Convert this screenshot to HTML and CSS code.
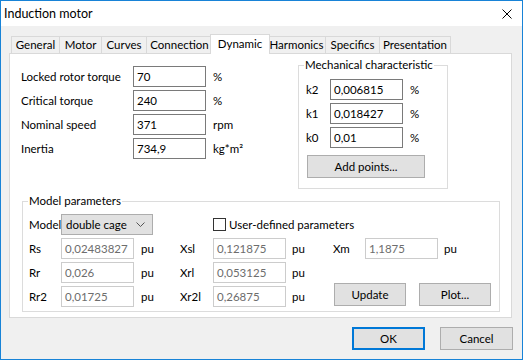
FILE: index.html
```html
<!DOCTYPE html>
<html>
<head>
<meta charset="utf-8">
<link rel="stylesheet" href="styles.css">
</head>
<body>
<div class="window">
  <div class="titlebar">
    <span class="title">Induction motor</span>
    <svg class="close" width="10" height="10" viewBox="0 0 10 10"><path d="M0.5 0.5L9.5 9.5M9.5 0.5L0.5 9.5" stroke="#000" stroke-width="1" fill="none"/></svg>
  </div>
  <div class="client">
    <div class="tabs">
      <div class="tab t-general">General</div>
      <div class="tab t-motor">Motor</div>
      <div class="tab t-curves">Curves</div>
      <div class="tab t-connection">Connection</div>
      <div class="tab active t-dynamic">Dynamic</div>
      <div class="tab t-harmonics">Harmonics</div>
      <div class="tab t-specifics">Specifics</div>
      <div class="tab t-presentation">Presentation</div>
    </div>
    <div class="panel">
      <div class="top-row">
        <div class="fields">
          <div class="field-row"><span class="lbl">Locked rotor torque</span><div class="input">70</div><span class="unit">%</span></div>
          <div class="field-row"><span class="lbl">Critical torque</span><div class="input">240</div><span class="unit">%</span></div>
          <div class="field-row"><span class="lbl">Nominal speed</span><div class="input">371</div><span class="unit">rpm</span></div>
          <div class="field-row"><span class="lbl">Inertia</span><div class="input">734,9</div><span class="unit">kg*m²</span></div>
        </div>
        <div class="group mech">
          <span class="legend">Mechanical characteristic</span>
          <div class="k-row"><span class="klbl">k2</span><div class="input">0,006815</div><span class="unit">%</span></div>
          <div class="k-row"><span class="klbl">k1</span><div class="input">0,018427</div><span class="unit">%</span></div>
          <div class="k-row"><span class="klbl">k0</span><div class="input">0,01</div><span class="unit">%</span></div>
          <div class="btn add">Add points...</div>
        </div>
      </div>
      <div class="group model">
        <span class="legend">Model parameters</span>
        <div class="model-grid">
          <span class="glbl">Model</span>
          <div class="select"><span>double cage</span><svg width="9" height="5" viewBox="0 0 9 5"><path d="M0.5 0.5L4.5 4.5L8.5 0.5" stroke="#555" stroke-width="1" fill="none"/></svg></div>
          <div class="check"><span class="box"></span><span>User-defined parameters</span></div>

          <span class="glbl">Rs</span><div class="input dis">0,02483827</div><span class="pu">pu</span>
          <span class="glbl">Xsl</span><div class="input dis">0,121875</div><span class="pu pu2">pu</span>
          <span class="glbl">Xm</span><div class="input dis">1,1875</div><span class="pu pu2">pu</span>

          <span class="glbl">Rr</span><div class="input dis">0,026</div><span class="pu">pu</span>
          <span class="glbl">Xrl</span><div class="input dis">0,053125</div><span class="pu pu2">pu</span>
          <span class="filler"></span>

          <span class="glbl">Rr2</span><div class="input dis">0,01725</div><span class="pu">pu</span>
          <span class="glbl">Xr2l</span><div class="input dis">0,26875</div><span class="pu pu2">pu</span>
          <div class="actions"><div class="btn small">Update</div><div class="btn small">Plot...</div></div>
        </div>
      </div>
    </div>
    <div class="footer">
      <div class="btn ok">OK</div>
      <div class="btn">Cancel</div>
    </div>
  </div>
</div>
</body>
</html>
```

FILE: styles.css
```css
* { box-sizing: border-box; }
body {
  margin: 0;
  font-family: Lato, "Noto Sans", sans-serif;
  font-size: 11.5px;
  color: #000;
}
.window {
  width: 523px;
  height: 360px;
  border: 1px solid #1883d7;
  background: #f0f0f0;
  display: flex;
  flex-direction: column;
}
.titlebar {
  height: 25px;
  background: #fff;
  display: flex;
  align-items: center;
  justify-content: space-between;
  padding: 0 10px 0 3px;
  flex: none;
}
.title { font-size: 12.5px; }
.close { display: block; }
.client {
  flex: 1;
  padding: 8px 10px 0 8px;
}
.tabs {
  display: flex;
  align-items: flex-end;
  height: 19px;
  padding-left: 3px;
}
.tab {
  height: 17px;
  border: 1px solid #d9d9d9;
  border-bottom: none;
  margin-left: -1px;
  background: #f0f0f0;
  text-align: center;
  line-height: 16px;
  white-space: nowrap;
}
.t-general { width: 49px; }
.t-motor { width: 43px; }
.t-curves { width: 46px; }
.t-connection { width: 67px; }
.t-harmonics { width: 59px; }
.t-specifics { width: 55px; }
.t-presentation { width: 72px; }
.tab.active {
  width: 60px;
  height: 20px;
  margin: 0 -2px -1px -3px;
  background: #fff;
  position: relative;
  z-index: 1;
  line-height: 17px;
}
.panel {
  width: 503px;
  height: 265px;
  border: 1px solid #d9d9d9;
  background: #fff;
  padding: 11px 11px 0 11px;
}
.top-row {
  display: flex;
  align-items: flex-start;
}
.fields {
  width: 277px;
  margin-top: 1px;
  display: flex;
  flex-direction: column;
  gap: 3px;
}
.field-row, .k-row {
  display: flex;
  align-items: center;
  height: 21px;
}
.lbl { width: 112px; white-space: nowrap; }
.input {
  width: 73px;
  height: 21px;
  border: 1px solid #7a7a7a;
  background: #fff;
  padding-left: 3px;
  line-height: 19px;
  white-space: nowrap;
  overflow: hidden;
}
.input.dis {
  border-color: #cccccc;
  color: #6d6d6d;
}
.unit { margin-left: 7px; white-space: nowrap; }
.group {
  position: relative;
  border: 1px solid #dcdcdc;
}
.legend {
  position: absolute;
  top: -9px;
  left: 5px;
  padding: 0 1px;
  background: #fff;
  line-height: 16px;
  white-space: nowrap;
}
.mech {
  width: 150px;
  height: 124px;
  padding: 13px 0 0 7px;
  display: flex;
  flex-direction: column;
  gap: 3px;
}
.klbl { width: 24px; }
.btn {
  height: 23px;
  border: 1px solid #adadad;
  background: #e1e1e1;
  display: flex;
  align-items: center;
  justify-content: center;
  white-space: nowrap;
}
.add {
  width: 118px;
  margin: 4px 0 0 1px;
}
.model {
  width: 478px;
  height: 111px;
  margin: 12px 0 0 1px;
  padding: 12px 0 0 6px;
}
.model-grid {
  display: grid;
  grid-template-columns: 32px 73px 46px 33px 73px 47px 32px 73px 1fr;
  grid-template-rows: 21px 21px 21px 21px;
  row-gap: 3px;
  align-items: center;
}
.glbl { white-space: nowrap; }
.select {
  grid-column: 2 / 4;
  width: 92px;
  height: 21px;
  border: 1px solid #adadad;
  background: #e1e1e1;
  display: flex;
  align-items: center;
  justify-content: space-between;
  padding: 0 7px 0 4px;
}
.select svg { display: block; }
.check {
  grid-column: 5 / -1;
  display: flex;
  align-items: center;
  gap: 3px;
}
.box {
  width: 13px;
  height: 13px;
  border: 1px solid #333;
  background: #fff;
}
.pu { padding-left: 7px; }
.pu2 { padding-left: 6px; }
.filler { grid-column: 7 / -1; }
.actions {
  grid-column: 7 / -1;
  display: flex;
  gap: 13px;
  align-self: start;
  margin: -3px 0 0 1px;
}
.btn.small { width: 72px; }
.footer {
  display: flex;
  justify-content: flex-end;
  gap: 15px;
  margin: 9px -1px 0 0;
}
.footer .btn { width: 73px; }
.btn.ok { border: 2px solid #0078d7; }
```
